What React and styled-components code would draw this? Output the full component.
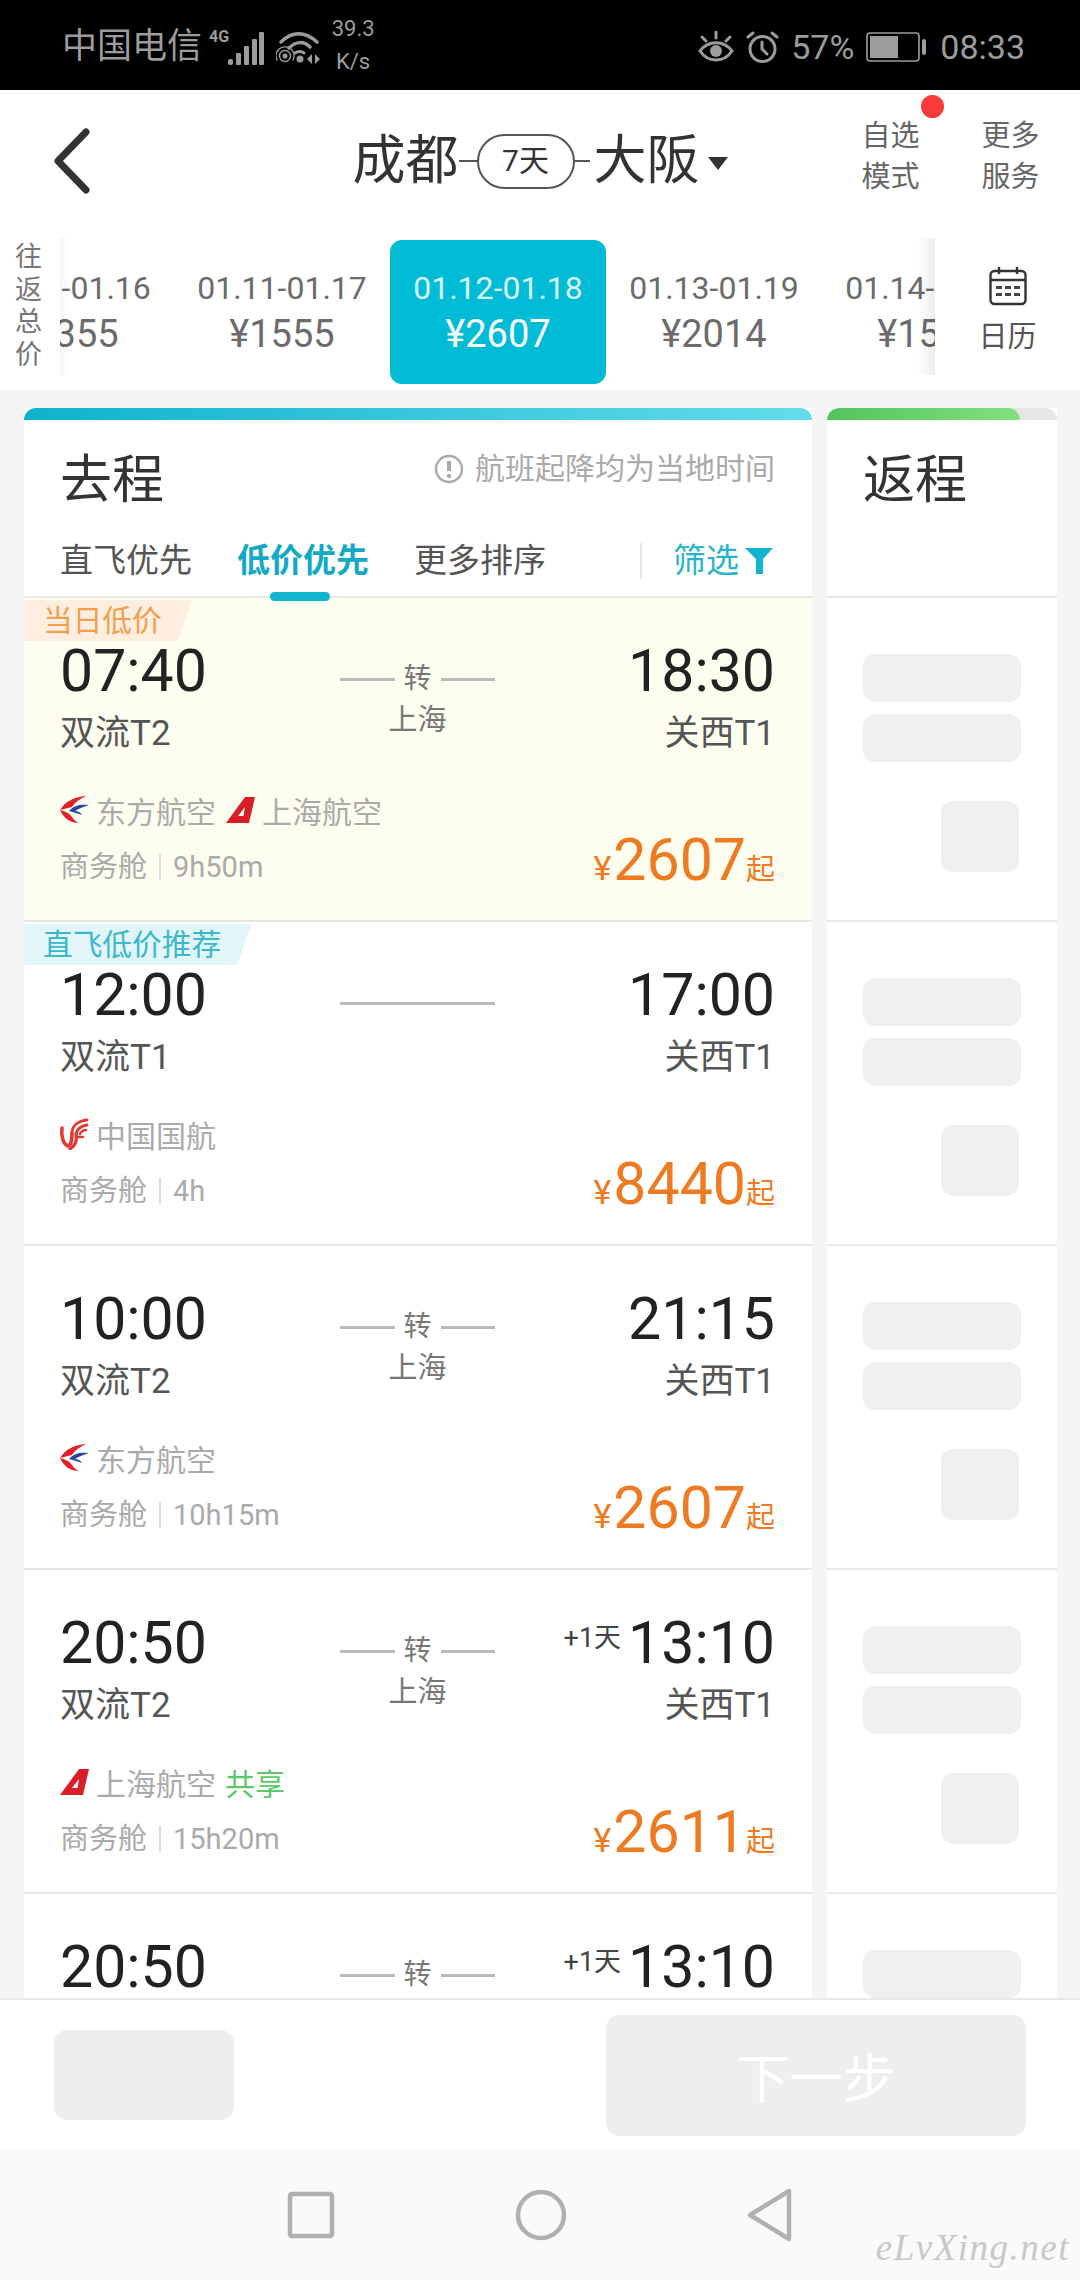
import React from "react";
import styled, { createGlobalStyle } from "styled-components";

const Global = createGlobalStyle`
  html, body { margin: 0; padding: 0; background: #fff; }
  * { box-sizing: border-box; }
  body { font-family: Roboto, "Noto Sans CJK SC", sans-serif; }
`;

const Page = styled.div`
  position: relative;
  width: 1080px;
  height: 2280px;
  display: flex;
  flex-direction: column;
  overflow: hidden;
  background: #f5f5f5;
  font-family: Roboto, "Noto Sans CJK SC", sans-serif;
`;

/* status bar */
const StatusBar = styled.div`
  height: 90px;
  flex: none;
  background: #000;
  color: #9c9c9c;
  display: flex;
  align-items: center;
  justify-content: space-between;
  padding: 4px 55px 0 62px;
`;
const StatusGroup = styled.div`
  display: flex;
  align-items: center;
  gap: ${(p) => p.$gap || 0}px;
`;
const Carrier = styled.span`
  font-size: 35px;
  line-height: 40px;
`;
const FourG = styled.span`
  font-size: 16px;
  font-weight: 700;
  line-height: 16px;
  margin: -20px 0 0 7px;
`;
const Speed = styled.div`
  font-size: 22px;
  line-height: 33px;
  text-align: center;
  width: 46px;
  margin-left: 10px;
  margin-top: -4px;
`;
const StatusText = styled.span`
  font-size: 34px;
  line-height: 40px;
`;

/* header */
const Header = styled.div`
  height: 148px;
  flex: none;
  background: #fff;
  display: grid;
  grid-template-columns: 1fr auto 1fr;
  align-items: center;
  padding: 0 40px 6px 52px;
`;
const BackBtn = styled.div`
  display: flex;
  align-items: center;
`;
const Route = styled.div`
  display: flex;
  align-items: center;
  font-size: 53px;
  line-height: 60px;
  color: #333;
  margin-left: -6px;
  margin-right: 6px;
`;
const Stub = styled.span`
  width: ${(p) => p.$w}px;
  height: 2px;
  background: #555;
`;
const DaysPill = styled.span`
  width: 98px;
  height: 55px;
  border: 2px solid #555;
  border-radius: 28px;
  font-size: 30px;
  line-height: 50px;
  text-align: center;
  color: #333;
`;
const CityGap = styled.span`
  margin-left: 4px;
`;
const Caret = styled.span`
  width: 0;
  height: 0;
  margin: 4px 0 0 8px;
  border-left: 10px solid transparent;
  border-right: 10px solid transparent;
  border-top: 13px solid #333;
`;
const Actions = styled.div`
  display: flex;
  justify-content: flex-end;
  gap: 61px;
  margin-top: -8px;
`;
const ActionBtn = styled.div`
  position: relative;
  width: 59px;
  font-size: 29px;
  line-height: 41px;
  color: #666;
  text-align: center;
`;
const RedDot = styled.span`
  position: absolute;
  top: -21px;
  right: -24px;
  width: 23px;
  height: 23px;
  border-radius: 50%;
  background: #f93a3a;
`;

/* date strip */
const DateStrip = styled.div`
  height: 152px;
  flex: none;
  background: #fff;
  display: flex;
`;
const TotalLabel = styled.div`
  position: relative;
  z-index: 1;
  width: 60px;
  flex: none;
  padding: 3px 0 0 15px;
  font-size: 27px;
  line-height: 32.5px;
  color: #777;
  background: #fff;
  &::after {
    content: "";
    position: absolute;
    top: 0;
    bottom: 15px;
    right: -12px;
    width: 12px;
    background: linear-gradient(90deg, rgba(0, 0, 0, 0.03), rgba(0, 0, 0, 0));
  }
`;
const DateScroll = styled.div`
  flex: 1;
  min-width: 0;
  overflow: hidden;
  display: flex;
  padding-bottom: 6px;
  margin-top: 2px;
`;
const DateTrack = styled.div`
  display: flex;
  margin-left: -102px;
`;
const DateItem = styled.div`
  width: 216px;
  flex: none;
  display: flex;
  flex-direction: column;
  align-items: center;
  justify-content: center;
  border-radius: 12px;
  background: ${(p) => (p.$active ? "#00bbd6" : "transparent")};
  color: ${(p) => (p.$active ? "#fff" : "#6b6b6b")};
  white-space: nowrap;
`;
const DateRange = styled.div`
  font-size: 32px;
  line-height: 44px;
  ${(p) => (p.$active ? "color: #d8f8fc;" : "")}
`;
const DatePrice = styled.div`
  font-size: 38px;
  line-height: 48px;
`;
const CalendarBtn = styled.div`
  position: relative;
  z-index: 1;
  width: 145px;
  flex: none;
  display: flex;
  flex-direction: column;
  align-items: center;
  padding-top: 28px;
  gap: 13px;
  background: #fff;
  font-size: 29px;
  line-height: 36px;
  color: #555;
  &::before {
    content: "";
    position: absolute;
    top: 0;
    bottom: 15px;
    left: -18px;
    width: 18px;
    background: linear-gradient(270deg, rgba(0, 0, 0, 0.07), rgba(0, 0, 0, 0));
  }
`;

/* content */
const Main = styled.div`
  flex: 1;
  min-height: 0;
  overflow: hidden;
  display: flex;
  gap: 15px;
  padding: 18px 23px 0 24px;
`;
const Column = styled.div`
  width: ${(p) => p.$w}px;
  flex: none;
  background: #fff;
`;
const TopBand = styled.div`
  height: 12px;
  border-radius: 12px 12px 0 0;
  background: linear-gradient(90deg, #0eb2cd, #62dcea);
`;
const ReturnBand = styled.div`
  height: 12px;
  border-radius: 12px 12px 0 0;
  background: #e6e6e6;
  overflow: hidden;
`;
const ReturnFill = styled.div`
  width: 193px;
  height: 12px;
  border-radius: 12px 12px 0 0;
  background: linear-gradient(90deg, #52c45c, #82e07f);
`;
const ColumnHead = styled.div`
  height: 178px;
  padding: 31px 37px 0 36px;
  border-bottom: 2px solid #e6e6e6;
  position: relative;
`;
const TitleRow = styled.div`
  display: flex;
  align-items: flex-start;
  justify-content: space-between;
`;
const Title = styled.div`
  font-size: 52px;
  line-height: 60px;
  color: #333;
`;
const Notice = styled.div`
  display: flex;
  align-items: center;
  gap: 11px;
  font-size: 30px;
  line-height: 36px;
  color: #aaa;
  white-space: nowrap;
`;
const SortTabs = styled.div`
  display: flex;
  align-items: center;
  margin-top: 28px;
  font-size: 33px;
  line-height: 44px;
  color: #555;
`;
const SortTab = styled.div`
  position: relative;
  margin-right: 45px;
  white-space: nowrap;
  ${(p) => (p.$active ? "color: #12a9c4; font-weight: 700;" : "")}
`;
const Underline = styled.span`
  position: absolute;
  z-index: 2;
  left: 33px;
  bottom: -18px;
  width: 60px;
  height: 9px;
  border-radius: 5px;
  background: #10b4cf;
`;
const FilterBtn = styled.div`
  margin-left: auto;
  margin-right: 2px;
  display: flex;
  align-items: center;
  gap: 6px;
  padding-left: 31px;
  height: 36px;
  border-left: 2px solid #e6e6e6;
  color: #29b4cb;
`;

const FlightRow = styled.div`
  position: relative;
  height: 324px;
  padding: 38px 37px 0 36px;
  border-bottom: 2px solid #e6e6e6;
  background: ${(p) => (p.$highlight ? "#fefef0" : "#fff")};
`;
const Badge = styled.div`
  position: absolute;
  left: 0;
  top: 2px;
  height: 41px;
  padding: 0 30px 0 19px;
  font-size: 29.7px;
  line-height: 41px;
  clip-path: polygon(0 0, 100% 0, calc(100% - 14px) 100%, 0 100%);
  color: ${(p) => (p.$tone === "blue" ? "#3bb8cc" : "#f0a04b")};
  background: ${(p) => (p.$tone === "blue" ? "#e2f6fa" : "#fdeee0")};
`;
const TimeGrid = styled.div`
  display: grid;
  grid-template-columns: 1fr 155px 1fr;
  column-gap: 24px;
`;
const Endpoint = styled.div`
  display: flex;
  flex-direction: column;
  align-items: ${(p) => (p.$right ? "flex-end" : "flex-start")};
  white-space: nowrap;
`;
const TimeLine = styled.div`
  display: flex;
  align-items: center;
  height: 70px;
`;
const Time = styled.span`
  font-size: 59px;
  line-height: 70px;
  color: #222;
`;
const NextDay = styled.span`
  font-size: 27px;
  line-height: 30px;
  color: #444;
  margin: -10px 7px 0 0;
`;
const Airport = styled.div`
  font-size: 35px;
  line-height: 44px;
  color: #555;
  margin-top: 6px;
`;
const Transfer = styled.div`
  display: flex;
  flex-direction: column;
  align-items: center;
  padding-top: 25px;
  color: #777;
`;
const TransferLine = styled.div`
  width: 155px;
  height: 36px;
  display: flex;
  align-items: center;
  gap: ${(p) => (p.$direct ? 0 : 9)}px;
  font-size: 28px;
  line-height: 36px;
  &::before, &::after {
    content: "";
    flex: 1;
    height: 3px;
    background: #bbb;
  }
`;
const Via = styled.div`
  font-size: 29px;
  line-height: 40px;
  margin-top: 3px;
`;
const AirlineRow = styled.div`
  display: flex;
  align-items: center;
  position: absolute;
  left: 35px;
  top: 192px;
  height: 40px;
  font-size: 30px;
  color: #aaa;
  white-space: nowrap;
`;
const AirlineName = styled.span`
  margin: 0 9px 0 7px;
`;
const Shared = styled.span`
  color: #5cc86a;
  margin-left: 0;
`;
const FareRow = styled.div`
  position: absolute;
  left: 36px;
  right: 37px;
  top: 234px;
  display: flex;
  align-items: center;
  justify-content: space-between;
`;
const FareInfo = styled.div`
  display: flex;
  align-items: center;
  font-size: 29px;
  line-height: 40px;
  margin-top: 4px;
  color: #aaa;
`;
const Sep = styled.span`
  width: 2px;
  height: 26px;
  margin: 0 12px;
  background: #ddd;
`;
const Price = styled.div`
  display: flex;
  align-items: baseline;
  color: #ee7a22;
  font-size: 59px;
  line-height: 56px;
`;
const PriceSign = styled.span`
  font-size: 34px;
  margin-right: 2px;
`;
const PriceFrom = styled.span`
  font-size: 29px;
  margin-left: 0;
`;

const GhostRow = styled.div`
  height: 324px;
  padding: 56px 36px 0;
  border-bottom: 2px solid #e9e9e9;
  display: flex;
  flex-direction: column;
  gap: 12px;
`;
const Ghost = styled.div`
  height: 48px;
  border-radius: 12px;
  background: #f0f0f0;
`;
const GhostSmall = styled.div`
  align-self: flex-end;
  width: 78px;
  height: 71px;
  margin: 27px 2px 0 0;
  border-radius: 12px;
  background: #f0f0f0;
`;

/* bottom */
const BottomBar = styled.div`
  height: 152px;
  flex: none;
  background: #fff;
  border-top: 2px solid #e8e8e8;
  display: flex;
  align-items: center;
  justify-content: space-between;
  padding: 0 54px;
`;
const GhostBtn = styled.div`
  width: 180px;
  height: 90px;
  border-radius: 14px;
  background: #eee;
`;
const NextBtn = styled.div`
  width: 420px;
  height: 121px;
  border-radius: 14px;
  background: #eee;
  color: #fff;
  font-size: 53px;
  line-height: 131px;
  text-align: center;
`;
const NavBar = styled.div`
  height: 130px;
  flex: none;
  background: #fafafa;
  display: flex;
  align-items: center;
  justify-content: center;
  gap: 180px;
`;
const Watermark = styled.div`
  position: absolute;
  right: 10px;
  bottom: 10px;
  font-family: "Liberation Serif", serif;
  font-style: italic;
  font-size: 37px;
  line-height: 44px;
  letter-spacing: 1.5px;
  color: #c8c8c8;
`;

/* icons */
const Bars = () => (
  <svg width="36" height="34" viewBox="0 0 36 34" fill="#9c9c9c" style={{ marginLeft: -1, marginTop: 4 }}>
    <rect x="0" y="27" width="5" height="6" rx="2" />
    <rect x="8" y="21" width="5" height="12" rx="1" />
    <rect x="16" y="14" width="5" height="19" rx="1" />
    <rect x="24" y="7" width="5" height="26" rx="1" />
    <rect x="31" y="0" width="5" height="33" rx="1" />
  </svg>
);
const Wifi = () => (
  <svg width="44" height="34" viewBox="0 0 44 34" fill="none" stroke="#9c9c9c" strokeLinecap="round" style={{ marginLeft: 12, marginTop: 4 }}>
    <path d="M5 10C16 -1 29 -1 41 10" strokeWidth="3.5" />
    <path d="M13 16C20 9 28 9 34 15" strokeWidth="3.5" />
    <path d="M19 21C22 19 25 19 28 21" strokeWidth="3" />
    <circle cx="24" cy="27" r="3.5" fill="#9c9c9c" stroke="none" />
    <circle cx="9" cy="24" r="2.5" fill="#9c9c9c" stroke="none" />
    <circle cx="9" cy="24" r="5.5" strokeWidth="1.4" />
    <path d="M1 28A9 9 0 1 1 17 28" strokeWidth="1.4" />
    <path d="M36 22L31 27L36 32Z M39 22L44 27L39 32Z" fill="#9c9c9c" stroke="none" />
  </svg>
);
const Eye = () => (
  <svg width="36" height="32" viewBox="0 0 36 32" fill="none" stroke="#9c9c9c" strokeWidth="3" strokeLinecap="round">
    <path d="M2 20C10 9 26 9 34 20C26 32 10 32 2 20Z" />
    <circle cx="18" cy="20" r="6" fill="#9c9c9c" stroke="none" />
    <path d="M18 1V7M4 6L8 10M32 6L28 10" />
  </svg>
);
const Alarm = () => (
  <svg width="33" height="33" viewBox="0 0 33 33" fill="none" stroke="#9c9c9c" strokeWidth="3" strokeLinecap="round">
    <circle cx="16.5" cy="18" r="12.5" />
    <path d="M16 11V18L21 23M2 6L7 2M31 6L26 2" />
  </svg>
);
const Battery = () => (
  <svg width="62" height="30" viewBox="0 0 62 30" fill="none">
    <rect x="1" y="1" width="52" height="28" rx="3" stroke="#9c9c9c" strokeWidth="1.6" />
    <rect x="4" y="4" width="28" height="22" fill="#9c9c9c" />
    <rect x="56" y="7" width="4" height="16" rx="2" fill="#9c9c9c" />
  </svg>
);
const BackIcon = () => (
  <svg width="40" height="66" viewBox="0 0 40 66" fill="none" stroke="#333" strokeWidth="7" strokeLinecap="round" strokeLinejoin="round">
    <path d="M34 4L6 33L34 62" />
  </svg>
);
const CalendarIcon = () => (
  <svg width="38" height="40" viewBox="0 0 38 40" fill="none" stroke="#333" strokeWidth="2.4">
    <rect x="1.5" y="5" width="35" height="33" rx="4" />
    <path d="M1.5 14H36.5M10 1V8M28 1V8" />
    <g fill="#444" stroke="none">
      <rect x="7" y="20" width="6" height="3" /><rect x="16" y="20" width="6" height="3" /><rect x="25" y="20" width="6" height="3" />
      <rect x="7" y="27" width="6" height="3" /><rect x="16" y="27" width="6" height="3" /><rect x="25" y="27" width="6" height="3" />
    </g>
  </svg>
);
const InfoIcon = () => (
  <svg width="30" height="30" viewBox="0 0 30 30" fill="none" stroke="#aaa" strokeWidth="2.4">
    <circle cx="15" cy="15" r="13" />
    <path d="M15 7V17" strokeWidth="4" />
    <circle cx="15" cy="22" r="2.2" fill="#aaa" stroke="none" />
  </svg>
);
const FilterIcon = () => (
  <svg width="28" height="26" viewBox="0 0 28 26" fill="#12b4cf">
    <path d="M0 0H28L18 11V26H11V11Z" />
  </svg>
);
const EasternLogo = () => (
  <svg width="30" height="30" viewBox="0 0 30 30">
    <path d="M1 15C6 7 14 2 27 1C21 4 16 7 13 12C9 13 5 14 1 15Z" fill="#e0212c" />
    <path d="M1 15C6 16 10 18 13 22C15 25 17 27 20 28C12 28 5 24 1 15Z" fill="#e0212c" />
    <path d="M10 16C15 10 22 9 30 10C24 12 19 14 16 16C19 16 21 17 23 20C18 18 14 17 10 16Z" fill="#26489c" />
  </svg>
);
const ShanghaiLogo = () => (
  <svg width="30" height="28" viewBox="0 0 30 28">
    <path fillRule="evenodd" d="M20 1H30L24 27H1ZM20 11L13 20H18.5Z" fill="#d81e26" />
  </svg>
);
const AirChinaLogo = () => (
  <svg width="30" height="32" viewBox="0 0 30 32" fill="none" stroke="#e03a33" strokeLinecap="round">
    <path d="M3 10C2 18 4 26 9 28C13 27 13 20 13 15" strokeWidth="3.6" />
    <path d="M13 15C13 7 20 3 28 2" strokeWidth="2.8" />
    <path d="M17 16C18 11 22 8 28 7" strokeWidth="2.8" />
    <path d="M21 16C22 14 24 12 27 12" strokeWidth="2.6" />
    <path d="M17 16C18 23 17 27 11 31" strokeWidth="3.2" />
    <path d="M18 19H24" strokeWidth="2.6" />
  </svg>
);
const NavSquare = () => (
  <svg width="48" height="48" viewBox="0 0 48 48" fill="none" stroke="#b0b0b0" strokeWidth="4.5">
    <rect x="3" y="3" width="42" height="42" rx="2" />
  </svg>
);
const NavCircle = () => (
  <svg width="52" height="52" viewBox="0 0 52 52" fill="none" stroke="#b0b0b0" strokeWidth="4.5">
    <circle cx="26" cy="26" r="23" />
  </svg>
);
const NavBack = () => (
  <svg width="46" height="54" viewBox="0 0 46 54" fill="none" stroke="#b0b0b0" strokeWidth="4.5" strokeLinejoin="round">
    <path d="M42 3V51L3 27Z" />
  </svg>
);

const dates = [
  ["01.10-01.16", "¥1355"],
  ["01.11-01.17", "¥1555"],
  ["01.12-01.18", "¥2607", true],
  ["01.13-01.19", "¥2014"],
  ["01.14-01.20", "¥1555"],
];

const logos = { east: <EasternLogo />, sh: <ShanghaiLogo />, ca: <AirChinaLogo /> };

const flights = [
  { dep: "07:40", arr: "18:30", from: "双流T2", to: "关西T1", via: "上海", badge: "当日低价", tone: "orange", highlight: true,
    air: [["east", "东方航空"], ["sh", "上海航空"]], dur: "9h50m", price: "2607" },
  { dep: "12:00", arr: "17:00", from: "双流T1", to: "关西T1", badge: "直飞低价推荐", tone: "blue",
    air: [["ca", "中国国航"]], dur: "4h", price: "8440" },
  { dep: "10:00", arr: "21:15", from: "双流T2", to: "关西T1", via: "上海",
    air: [["east", "东方航空"]], dur: "10h15m", price: "2607" },
  { dep: "20:50", arr: "13:10", next: true, from: "双流T2", to: "关西T1", via: "上海", shared: true,
    air: [["sh", "上海航空"]], dur: "15h20m", price: "2611" },
  { dep: "20:50", arr: "13:10", next: true, from: "双流T2", to: "关西T1", via: "上海",
    air: [["sh", "上海航空"]], dur: "15h20m", price: "2611" },
];

const Flight = ({ f }) => (
  <FlightRow $highlight={f.highlight}>
    {f.badge && <Badge $tone={f.tone}>{f.badge}</Badge>}
    <TimeGrid>
      <Endpoint>
        <TimeLine><Time>{f.dep}</Time></TimeLine>
        <Airport>{f.from}</Airport>
      </Endpoint>
      <Transfer>
        <TransferLine $direct={!f.via}>{f.via ? "转" : null}</TransferLine>
        {f.via && <Via>{f.via}</Via>}
      </Transfer>
      <Endpoint $right>
        <TimeLine>
          {f.next && <NextDay>+1天</NextDay>}
          <Time>{f.arr}</Time>
        </TimeLine>
        <Airport>{f.to}</Airport>
      </Endpoint>
    </TimeGrid>
    <AirlineRow>
      {f.air.map(([k, name]) => (
        <React.Fragment key={name}>
          {logos[k]}
          <AirlineName>{name}</AirlineName>
        </React.Fragment>
      ))}
      {f.shared && <Shared>共享</Shared>}
    </AirlineRow>
    <FareRow>
      <FareInfo>商务舱<Sep />{f.dur}</FareInfo>
      <Price><PriceSign>¥</PriceSign>{f.price}<PriceFrom>起</PriceFrom></Price>
    </FareRow>
  </FlightRow>
);

export default function App() {
  return (
    <Page>
      <Global />
      <StatusBar>
        <StatusGroup>
          <Carrier>中国电信</Carrier>
          <FourG>4G</FourG>
          <Bars />
          <Wifi />
          <Speed>39.3<br />K/s</Speed>
        </StatusGroup>
        <StatusGroup $gap={12}>
          <Eye />
          <Alarm />
          <StatusText>57%</StatusText>
          <Battery />
          <StatusText>08:33</StatusText>
        </StatusGroup>
      </StatusBar>

      <Header>
        <BackBtn><BackIcon /></BackBtn>
        <Route>
          成都<Stub $w={18} /><DaysPill>7天</DaysPill><Stub $w={15} />
          <CityGap>大阪</CityGap><Caret />
        </Route>
        <Actions>
          <ActionBtn>自选<br />模式<RedDot /></ActionBtn>
          <ActionBtn>更多<br />服务</ActionBtn>
        </Actions>
      </Header>

      <DateStrip>
        <TotalLabel>往<br />返<br />总<br />价</TotalLabel>
        <DateScroll>
          <DateTrack>
            {dates.map(([range, price, active]) => (
              <DateItem key={range} $active={active}>
                <DateRange $active={active}>{range}</DateRange>
                <DatePrice>{price}</DatePrice>
              </DateItem>
            ))}
          </DateTrack>
        </DateScroll>
        <CalendarBtn><CalendarIcon />日历</CalendarBtn>
      </DateStrip>

      <Main>
        <Column $w={788}>
          <TopBand />
          <ColumnHead>
            <TitleRow>
              <Title>去程</Title>
              <Notice><InfoIcon />航班起降均为当地时间</Notice>
            </TitleRow>
            <SortTabs>
              <SortTab>直飞优先</SortTab>
              <SortTab $active>低价优先<Underline /></SortTab>
              <SortTab>更多排序</SortTab>
              <FilterBtn>筛选<FilterIcon /></FilterBtn>
            </SortTabs>
          </ColumnHead>
          {flights.map((f, i) => <Flight key={i} f={f} />)}
        </Column>
        <Column $w={230}>
          <ReturnBand><ReturnFill /></ReturnBand>
          <ColumnHead><Title>返程</Title></ColumnHead>
          {flights.map((_, i) => (
            <GhostRow key={i}>
              <Ghost />
              <Ghost />
              <GhostSmall />
            </GhostRow>
          ))}
        </Column>
      </Main>

      <BottomBar>
        <GhostBtn />
        <NextBtn>下一步</NextBtn>
      </BottomBar>
      <NavBar>
        <NavSquare />
        <NavCircle />
        <NavBack />
      </NavBar>
      <Watermark>eLvXing.net</Watermark>
    </Page>
  );
}
